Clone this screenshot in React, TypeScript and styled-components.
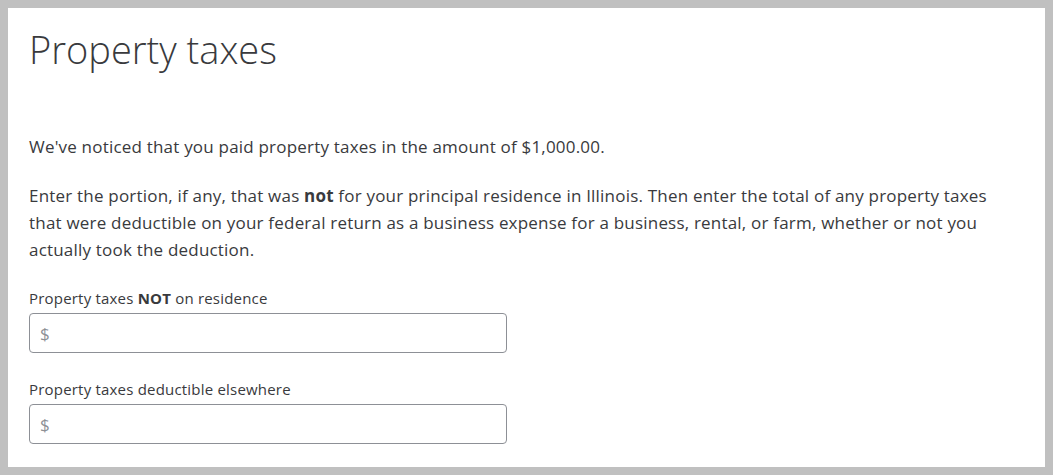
import styled, { createGlobalStyle } from "styled-components";

const GlobalStyle = createGlobalStyle`
    html, body {
        margin: 0;
        padding: 0;
        background: #c0c0c0;
    }
    * {
        box-sizing: border-box;
    }
`;

const Frame = styled.div`
    width: 1053px;
    height: 475px;
    padding: 8px;
    background: #c0c0c0;
`;

const Page = styled.main`
    width: 100%;
    height: 100%;
    background: #ffffff;
    padding: 17px 21px 0 21px;
    font-family: "Open Sans", "Noto Sans", sans-serif;
    color: #393a3d;
    overflow: hidden;
`;

const Title = styled.h1`
    margin: 0 0 60px 0;
    font-size: 38px;
    font-weight: 300;
    line-height: 48px;
    color: #393a3d;
`;

const Text = styled.p`
    margin: 0 0 22px 0;
    font-size: 17px;
    letter-spacing: 0.2px;
    line-height: 27px;
`;

const Field = styled.div`
    display: flex;
    flex-direction: column;
    gap: 5px;
    margin-top: ${(p: { $top: number }) => p.$top}px;
`;

const Label = styled.label`
    font-size: 15px;
    letter-spacing: 0.2px;
    line-height: 20px;
`;

const InputBox = styled.div`
    width: 478px;
    height: 40px;
    border: 1px solid #8d9096;
    border-radius: 4px;
    display: flex;
    align-items: center;
    padding: 0 10px;
    font-size: 17px;
    color: #8d9096;
`;

const App = () => {
    return (
        <>
            <GlobalStyle />
            <Frame>
                <Page>
                    <Title>Property taxes</Title>

                    <Text>We've noticed that you paid property taxes in the amount of $1,000.00.</Text>
                    <Text>
                        Enter the portion, if any, that was <b>not</b> for your principal residence in Illinois. Then enter the total of any property taxes<br />
                        that were deductible on your federal return as a business expense for a business, rental, or farm, whether or not you<br />
                        actually took the deduction.
                    </Text>

                    <Field $top={25}>
                        <Label>Property taxes <b>NOT</b> on residence</Label>
                        <InputBox>$</InputBox>
                    </Field>

                    <Field $top={26}>
                        <Label>Property taxes deductible elsewhere</Label>
                        <InputBox>$</InputBox>
                    </Field>
                </Page>
            </Frame>
        </>
    );
}

export default App;
